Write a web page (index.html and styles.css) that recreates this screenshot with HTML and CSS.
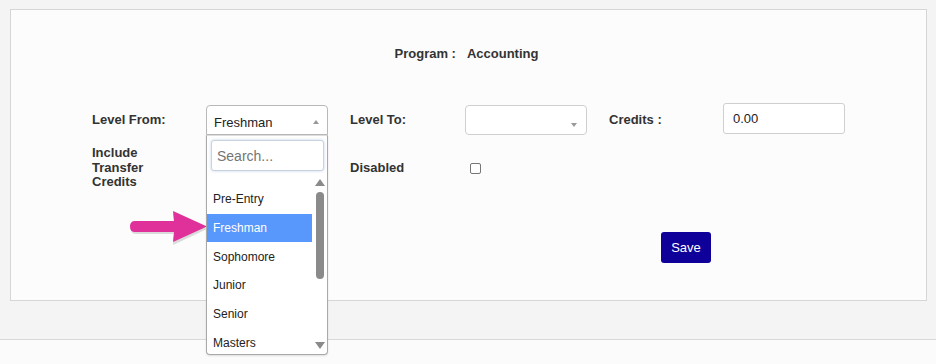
FILE: index.html
```html
<!DOCTYPE html>
<html lang="en">
<head>
 <meta charset="UTF-8">
 <meta name="viewport" content="width=device-width, initial-scale=1.0">
 <title>Program Level</title>
 <link rel="stylesheet" href="styles.css">
</head>
<body>
 <div class="panel">
  <div class="program">
   <span class="label">Program :</span>
   <span class="label">Accounting</span>
  </div>

  <div class="form">
   <div class="label cell-label">Level From:</div>
   <div class="cell">
    <div class="select open">
     <span class="select-text">Freshman</span>
     <span class="caret up"></span>
     <div class="dropdown">
      <input class="search" type="text" placeholder="Search...">
      <div class="results">
       <ul class="options">
        <li>Pre-Entry</li>
        <li class="hl">Freshman</li>
        <li>Sophomore</li>
        <li>Junior</li>
        <li>Senior</li>
        <li>Masters</li>
       </ul>
       <div class="scrollbar">
        <span class="sb-up"></span>
        <span class="sb-thumb"></span>
        <span class="sb-down"></span>
       </div>
      </div>
     </div>
    </div>
   </div>
   <div class="label cell-label">Level To:</div>
   <div class="cell">
    <div class="select">
     <span class="select-text"></span>
     <span class="caret down"></span>
    </div>
   </div>
   <div class="label cell-label">Credits :</div>
   <div class="cell">
    <input class="credits" type="text" value="0.00">
   </div>

   <div class="label multi">Include<br>Transfer<br>Credits</div>
   <div></div>
   <div class="label disabled-label">Disabled</div>
   <div class="cell"><span class="checkbox"></span></div>
   <div></div>
   <div></div>

   <div class="save-row">
    <button class="save">Save</button>
   </div>
  </div>

  <!-- callout arrow pointing at the selected option -->
  <svg class="pointer" width="84" height="48" viewBox="0 0 84 48">
   <path d="M8 23 L46 23 L45 13 L79 29 L45 45 L46 34 L8 34 Q3 34 3 28.5 Q3 23 8 23 Z" fill="#9a9a9a" opacity="0.35"/>
   <path d="M7 21 L46 21 L45 11 L79 26.5 L45 42 L46 32 L7 32 Q2 32 2 26.5 Q2 21 7 21 Z" fill="#e0309a"/>
  </svg>
 </div>
 <div class="footer"></div>
</body>
</html>
```

FILE: styles.css
```css
* { box-sizing: border-box; }
body {
margin: 0;
background: #f4f4f4;
font-family: "Liberation Sans", Arial, sans-serif;
font-size: 13px;
color: #333;
height: 364px;
overflow: hidden;
}
.panel {
position: relative;
margin: 9px 9px 0 10px;
height: 292px;
background: #fcfcfc;
border: 1px solid #d6d6d6;
padding-top: 36px;
}
.label {
font-weight: bold;
line-height: 15px;
color: #333;
}
.program {
display: flex;
justify-content: center;
gap: 11px;
height: 15px;
padding-right: 4px;
}
.form {
display: grid;
grid-template-columns: 114px 144px 115px 144px 114px 122px;
grid-template-rows: 32px 45px 30px;
row-gap: 10px;
padding-left: 81px;
margin-top: 42px;
}
.form .save-row { margin-top: 32px; }
.cell-label { padding-top: 9px; }
.cell { position: relative; }
.select {
position: relative;
margin-top: 2px;
width: 122px;
height: 30px;
background: #fff;
border: 1px solid #cfcfcf;
border-radius: 4px;
}
.select.open {
border-color: #b8b8b8;
border-radius: 4px 4px 0 0;
}
.select-text {
display: block;
padding: 9px 0 0 7px;
color: #222;
line-height: 15px;
}
.caret {
position: absolute;
right: 8px;
top: 13px;
width: 0;
height: 0;
border-left: 3px solid transparent;
border-right: 3px solid transparent;
}
.caret.up { border-bottom: 4px solid #999; top: 14px; }
.caret.down { border-top: 4px solid #999; top: 17px; right: 9px; }
.dropdown {
position: absolute;
left: -1px;
top: 29px;
width: 122px;
height: 220px;
background: #fff;
border: 1px solid #a9a9a9;
border-top-color: #ddd;
border-radius: 0 0 4px 4px;
box-shadow: 0 1px 2px rgba(0, 0, 0, 0.12);
z-index: 2;
}
.search {
display: block;
margin: 4px 0 0 4px;
width: 113px;
height: 31px;
border: 1px solid #c9d3de;
border-radius: 3px;
box-shadow: 0 0 3px rgba(120, 160, 210, 0.45);
padding: 0 5px;
font-family: "Liberation Sans", Arial, sans-serif;
font-size: 14px;
color: #333;
outline: none;
}
.search::placeholder { color: #757575; }
.results {
position: relative;
height: 182px;
}
.options {
list-style: none;
margin: 0;
padding: 14px 0 0 0;
width: 105px;
}
.options li {
height: 28.7px;
display: flex;
align-items: center;
padding-left: 6px;
font-size: 12px;
color: #222;
}
.options li.hl {
background: #5897fb;
color: #fff;
}
.scrollbar {
position: absolute;
top: 0;
right: 1px;
width: 12px;
height: 182px;
}
.sb-up, .sb-down {
position: absolute;
left: 1px;
width: 0;
height: 0;
border-left: 5px solid transparent;
border-right: 5px solid transparent;
}
.sb-up { top: 8px; border-bottom: 7px solid #8a8a8a; }
.sb-down { bottom: 4px; border-top: 7px solid #8a8a8a; }
.sb-thumb {
position: absolute;
left: 2px;
top: 21px;
width: 8px;
height: 87px;
background: #8a8a8a;
border-radius: 4px;
}
.credits {
display: block;
width: 122px;
height: 31px;
border: 1px solid #cfcfcf;
border-radius: 3px;
background: #fff;
padding: 0 9px;
font-family: "Liberation Sans", Arial, sans-serif;
font-size: 13px;
color: #222;
outline: none;
}
.multi { padding-top: 1px; line-height: 14.5px; }
.disabled-label { padding-top: 15px; }
.checkbox {
display: block;
margin: 18px 0 0 5px;
width: 11px;
height: 11px;
border: 1px solid #767676;
border-radius: 2px;
background: #fff;
}
.save-row {
grid-column: 5 / span 2;
padding-left: 52px;
}
.save {
width: 50px;
height: 31px;
background: #10009a;
color: #fff;
border: none;
border-radius: 3px;
font-family: "Liberation Sans", Arial, sans-serif;
font-size: 13px;
}
.pointer {
position: absolute;
left: 117px;
top: 190px;
}
.footer {
margin-top: 38px;
height: 30px;
border-top: 1px solid #d9d9d9;
background: #fbfbfb;
}
```
